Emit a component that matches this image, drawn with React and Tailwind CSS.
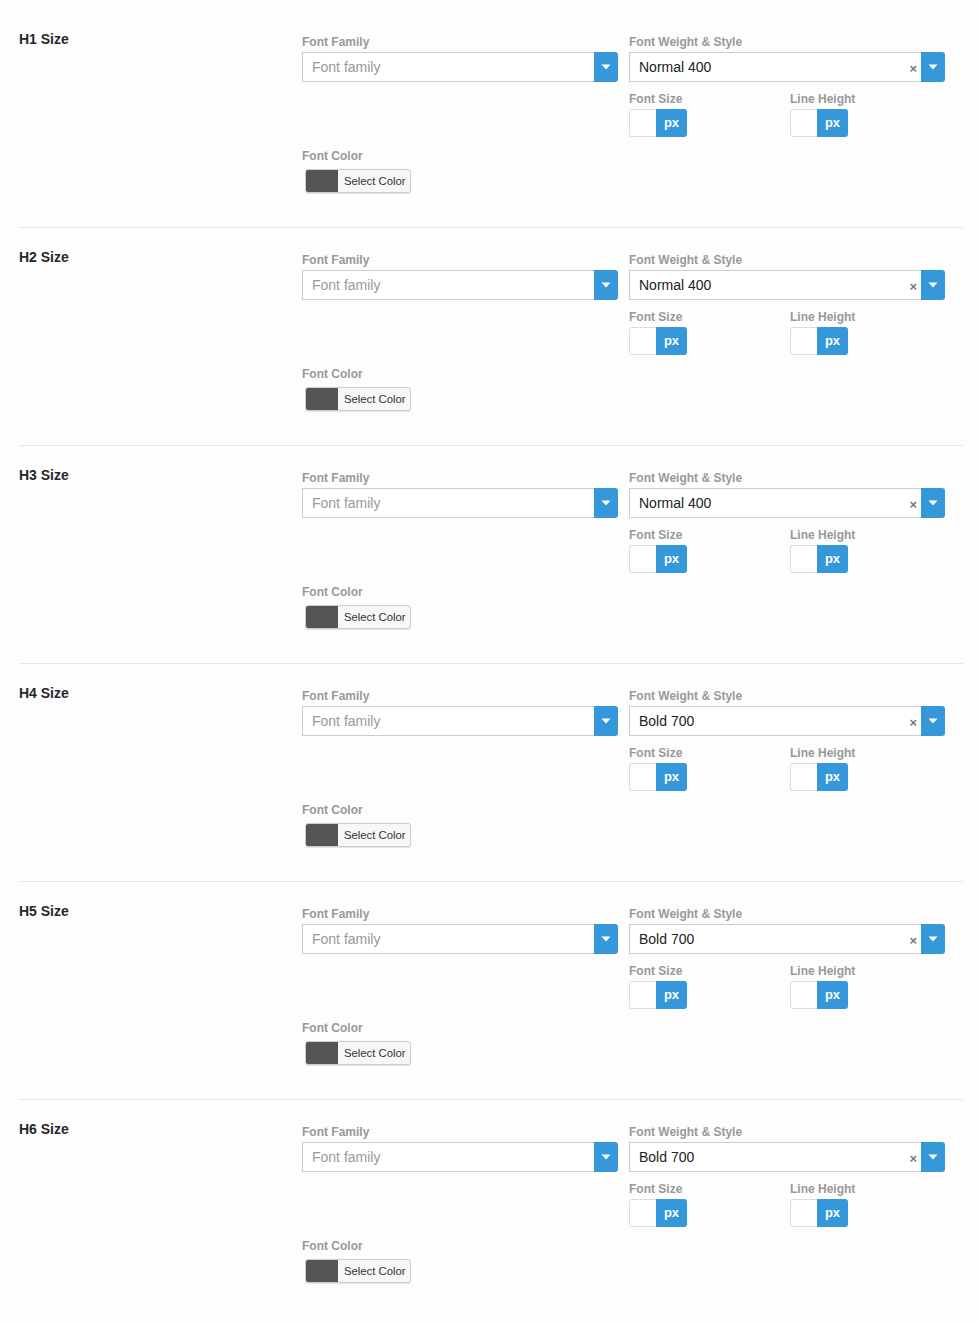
import React from "react";

const sections = [
  { h: "H1 Size", w: "Normal 400" },
  { h: "H2 Size", w: "Normal 400" },
  { h: "H3 Size", w: "Normal 400" },
  { h: "H4 Size", w: "Bold 700" },
  { h: "H5 Size", w: "Bold 700" },
  { h: "H6 Size", w: "Bold 700", last: true },
];

function Arrow() {
  return (
    <svg width="10" height="6" viewBox="0 0 10 6" className="block">
      <path d="M0.5 0.5 L9.5 0.5 L5 5.5 Z" fill="#ffffff" />
    </svg>
  );
}

function Label({ children }) {
  return (
    <div className="text-[12px] leading-[18px] font-bold text-[#999999] mb-[1px]">{children}</div>
  );
}

function SelectBox({ value, placeholder, clear }) {
  return (
    <div className="flex h-[30px]">
      <div className="flex-1 flex items-center border border-[#cccccc] border-r-0 bg-white pl-[9px] pr-[4px] h-[30px]">
        <span className={"flex-1 text-[14px] " + (placeholder ? "text-[#999999]" : "text-[#222222]")}>
          {value}
        </span>
        {clear && (
          <span className="text-[13px] font-bold text-[#777777] leading-none mt-[3px] mr-[0px]">×</span>
        )}
      </div>
      <div className="w-[24px] h-[30px] bg-[#3498db] rounded-r-[3px] flex items-center justify-center">
        <Arrow />
      </div>
    </div>
  );
}

function PxInput() {
  return (
    <div className="flex h-[28px] w-[58px]">
      <div className="w-[27px] h-[28px] bg-white border border-[#dddddd] border-r-0 rounded-l-[3px]" />
      <div className="w-[31px] h-[28px] bg-[#3498db] rounded-r-[3px] flex items-center justify-center text-white text-[13px] font-bold pb-[1px]">
        px
      </div>
    </div>
  );
}

function Section({ h, w, last }) {
  return (
    <div className={"flex h-[218px] " + (last ? "" : "border-b border-[#e6e6e6]")}>
      <div className="w-[283px] pt-[19px] text-[14px] leading-[20px] font-bold text-[#23282d]">{h}</div>
      <div className="w-[643px] pt-[23px]">
        <div className="grid grid-cols-2 gap-x-[11px]">
          <div>
            <Label>Font Family</Label>
            <SelectBox value="Font family" placeholder />
          </div>
          <div>
            <Label>Font Weight &amp; Style</Label>
            <SelectBox value={w} clear />
          </div>
          <div />
          <div className="flex pt-[8px]">
            <div className="w-[161px]">
              <Label>Font Size</Label>
              <PxInput />
            </div>
            <div>
              <Label>Line Height</Label>
              <PxInput />
            </div>
          </div>
        </div>
        <div className="pt-[10px]">
          <Label>Font Color</Label>
          <div className="ml-[3px] mt-[4px] flex h-[24px] w-[106px] border border-[#cccccc] rounded-[3px] bg-[#f7f7f7] overflow-hidden shadow-[0_1px_0_#e5e5e5]">
            <div className="w-[32px] h-full bg-[#555555]" />
            <div className="flex-1 flex items-center pl-[6px] text-[11.3px] text-[#333333]">Select Color</div>
          </div>
        </div>
      </div>
    </div>
  );
}

export default function App() {
  return (
    <div className="min-h-[1322px] bg-[#fdfdfd] pt-[10px] pl-[19px] pr-[15px]" style={{ fontFamily: '"Liberation Sans", Arial, sans-serif' }}>
      {sections.map((s) => (
        <Section key={s.h} {...s} />
      ))}
    </div>
  );
}
